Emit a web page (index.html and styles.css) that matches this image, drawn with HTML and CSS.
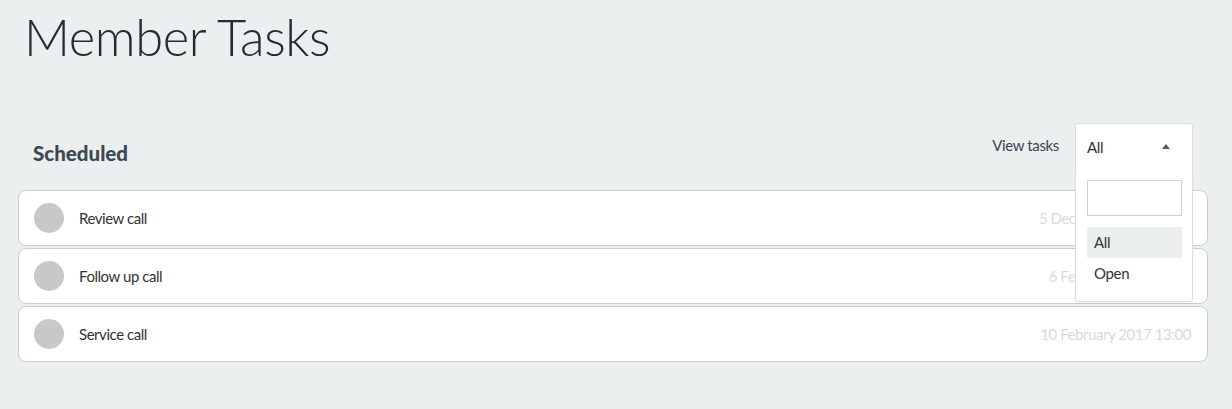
FILE: index.html
```html
<!DOCTYPE html>
<html>
<head>
<meta charset="utf-8">
<link rel="stylesheet" href="styles.css">
</head>
<body>
<div class="page">
  <h1 class="title">Member Tasks</h1>
  <div class="section-head">
    <h2 class="section-title">Scheduled</h2>
    <div class="filter">
      <span class="filter-label">View tasks</span>
      <div class="select">
        <div class="select-current">
          <span>All</span>
          <span class="caret"></span>
        </div>
        <div class="select-panel">
          <div class="select-search"></div>
          <ul class="select-options">
            <li class="option active">All</li>
            <li class="option">Open</li>
          </ul>
        </div>
      </div>
    </div>
  </div>
  <ul class="tasks">
    <li class="task"><span class="dot"></span><span class="task-name">Review call</span><span class="task-date">5 December 2016 10:00</span></li>
    <li class="task"><span class="dot"></span><span class="task-name">Follow up call</span><span class="task-date">6 February 2017 11:00</span></li>
    <li class="task"><span class="dot"></span><span class="task-name">Service call</span><span class="task-date">10 February 2017 13:00</span></li>
  </ul>
</div>
</body>
</html>
```

FILE: styles.css
```css
* { box-sizing: border-box; }
html, body { margin: 0; padding: 0; }
body {
  background: #ebeff0;
  font-family: Lato, "Open Sans", sans-serif;
  color: #333;
  width: 1232px;
  height: 409px;
  overflow: hidden;
}
.page {
  padding: 0 24px 0 18px;
}
.title {
  margin: 0;
  padding: 5px 0 0 6px;
  font-weight: 300;
  font-size: 50.7px;
  line-height: 63px;
  color: #262a33;
  letter-spacing: -0.4px;
}
.section-head {
  display: flex;
  justify-content: space-between;
  align-items: flex-start;
  margin-top: 55px;
  height: 67px;
  padding: 0 15px;
}
.section-title {
  margin: 18px 0 0 0;
  font-size: 20.5px;
  font-weight: 900;
  color: #3b4a52;
  line-height: 24px;
}
.filter {
  display: flex;
  align-items: flex-start;
}
.filter-label {
  margin-top: 12px;
  margin-right: 16px;
  font-size: 15px;
  letter-spacing: -0.35px;
  color: #3b4652;
  line-height: 20px;
}
.select {
  position: relative;
  width: 118px;
  z-index: 2;
}
.select-current {
  display: flex;
  align-items: center;
  justify-content: space-between;
  height: 46px;
  padding: 0 22px 0 11px;
  font-size: 15px;
  letter-spacing: -0.35px;
  color: #333;
  background: #fff;
  border: 1px solid #dcdfe2;
  border-bottom: none;
  border-radius: 3px 3px 0 0;
}
.caret {
  width: 0;
  height: 0;
  border-left: 4.5px solid transparent;
  border-right: 4.5px solid transparent;
  border-bottom: 5px solid #555b66;
}
.select-panel {
  position: absolute;
  left: 0;
  top: 46px;
  width: 118px;
  background: #fff;
  border: 1px solid #dcdfe2;
  border-top: none;
  border-radius: 0 0 3px 3px;
  padding: 11px 10px 12px 11px;
  box-shadow: 0 1px 2px rgba(0,0,0,0.05);
}
.select-search {
  height: 36px;
  border: 1px solid #cfd3d6;
  background: #fff;
}
.select-options {
  list-style: none;
  margin: 11px 0 0 0;
  padding: 0;
}
.option {
  height: 31px;
  line-height: 31px;
  padding-left: 7px;
  font-size: 15px;
  letter-spacing: -0.35px;
  color: #333;
}
.option.active {
  background: #ebeff0;
}
.tasks {
  list-style: none;
  margin: 0;
  padding: 0;
  display: flex;
  flex-direction: column;
  gap: 2px;
}
.task {
  display: flex;
  align-items: center;
  height: 56px;
  background: #fff;
  border: 1px solid #cccccc;
  border-radius: 8px;
  padding: 0 16px 0 15px;
}
.dot {
  width: 30px;
  height: 30px;
  border-radius: 50%;
  background: #c8c8c8;
  flex: none;
}
.task-name {
  margin-left: 15px;
  font-size: 15px;
  letter-spacing: -0.45px;
  color: #333;
  flex: 1;
}
.task-date {
  font-size: 15px;
  letter-spacing: -0.45px;
  color: #d8dadd;
}
```
